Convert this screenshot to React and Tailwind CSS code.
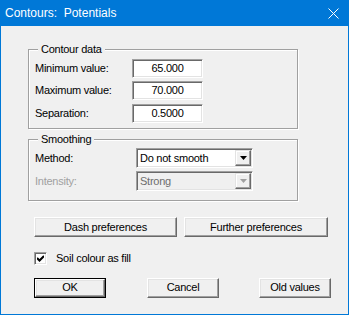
import React from "react";

const font = { fontFamily: '"Liberation Sans", Arial, sans-serif' };

function Sunken({ className = "", children }) {
  return (
    <div
      className={
        "border border-t-[#a0a0a0] border-l-[#a0a0a0] border-r-white border-b-white shadow-[inset_1px_1px_0_#696969,inset_-1px_-1px_0_#e3e3e3] " +
        className
      }
    >
      {children}
    </div>
  );
}

function Button({ className = "", children, def = false }) {
  const inner = (
    <div className="w-full h-full flex items-center justify-center border border-t-white border-l-white border-r-[#696969] border-b-[#696969] shadow-[inset_-1px_-1px_0_#a0a0a0,inset_1px_1px_0_#e3e3e3] bg-[#f0f0f0] text-[11px] tracking-[-0.25px] text-black">
      {children}
    </div>
  );
  if (def) {
    return <div className={"border border-black " + className}>{inner}</div>;
  }
  return <div className={className}>{inner}</div>;
}

function Group({ title, className = "", children }) {
  return (
    <div
      className={
        "relative border border-[#a0a0a0] shadow-[inset_1px_1px_0_#fff,1px_1px_0_#fff] " +
        className
      }
    >
      <div className="absolute top-[-8px] left-[9px] bg-[#f0f0f0] px-[3px] text-[11px] tracking-[-0.25px] leading-[14px] text-black">
        {title}
      </div>
      {children}
    </div>
  );
}

function Field({ label, value }) {
  return (
    <div className="flex items-center">
      <div className="w-[97px] text-[11px] tracking-[-0.25px] text-black">{label}</div>
      <Sunken className="w-[71px] h-[19px] bg-white flex items-center justify-center text-[11px] tracking-[-0.25px] text-black">
        {value}
      </Sunken>
    </div>
  );
}

function Select({ value, disabled }) {
  return (
    <Sunken
      className={
        "w-[117px] h-[20px] flex items-center pl-[3px] pr-[1px] text-[11px] tracking-[-0.25px] " +
        (disabled ? "bg-[#f0f0f0] text-[#6d6d6d]" : "bg-white text-black")
      }
    >
      <div className="flex-1">{value}</div>
      <div className="w-[16px] h-[16px] flex items-center justify-center border border-t-[#e3e3e3] border-l-[#e3e3e3] border-r-[#696969] border-b-[#696969] shadow-[inset_-1px_-1px_0_#a0a0a0,inset_1px_1px_0_#fff] bg-[#f0f0f0]">
        <svg width="7" height="4" viewBox="0 0 7 4">
          <polygon points="0,0 7,0 3.5,4" fill={disabled ? "#a0a0a0" : "#000"} />
        </svg>
      </div>
    </Sunken>
  );
}

export default function App() {
  return (
    <div className="w-[349px] h-[315px] bg-[#0078d7] flex flex-col" style={font}>
      <div className="h-[26px] flex items-center justify-between pl-[5px] pr-[10px] text-white text-[12px]">
        <span className="whitespace-pre">Contours:  Potentials</span>
        <svg width="11" height="11" viewBox="0 0 11 11">
          <path d="M0.5 0.5 L10.5 10.5 M10.5 0.5 L0.5 10.5" stroke="#fff" strokeWidth="1" />
        </svg>
      </div>
      <div className="flex-1 mx-[1px] mb-[1px] bg-[#f0f0f0] flex flex-col pl-[27px]">
        <Group title="Contour data" className="mt-[23px] w-[270px] h-[80px] pl-[6px] pt-[9px]">
          <Field label="Minimum value:" value="65.000" />
          <div className="mt-[3px]">
            <Field label="Maximum value:" value="70.000" />
          </div>
          <div className="mt-[4px]">
            <Field label="Separation:" value="0.5000" />
          </div>
        </Group>
        <Group title="Smoothing" className="mt-[10px] w-[270px] h-[62px] pl-[6px] pt-[8px]">
          <div className="flex items-center">
            <div className="w-[101px] text-[11px] tracking-[-0.25px] text-black">Method:</div>
            <Select value="Do not smooth" />
          </div>
          <div className="flex items-center mt-[3px]">
            <div className="w-[101px] text-[11px] tracking-[-0.25px] text-[#a0a0a0]">Intensity:</div>
            <Select value="Strong" disabled />
          </div>
        </Group>
        <div className="flex mt-[16px] ml-[6px] gap-[7px]">
          <Button className="w-[143px] h-[20px]">Dash preferences</Button>
          <Button className="w-[144px] h-[20px]">Further preferences</Button>
        </div>
        <div className="flex items-center mt-[13px] ml-[6px]">
          <Sunken className="w-[13px] h-[13px] bg-white flex items-center justify-center">
            <svg width="7" height="7" viewBox="0 0 7 7">
              <path d="M0 3 L2.5 5.5 L7 1" stroke="#000" strokeWidth="2" fill="none" />
            </svg>
          </Sunken>
          <span className="ml-[9px] text-[11px] tracking-[-0.25px] text-black">Soil colour as fill</span>
        </div>
        <div className="flex mt-[11px] ml-[6px]">
          <Button def className="w-[72px] h-[20px]">OK</Button>
          <Button className="w-[72px] h-[20px] ml-[41px]">Cancel</Button>
          <Button className="w-[72px] h-[20px] ml-[40px]">Old values</Button>
        </div>
      </div>
    </div>
  );
}
